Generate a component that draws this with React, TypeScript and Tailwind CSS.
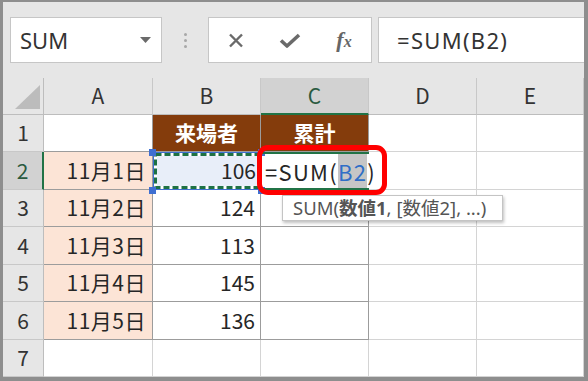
import React from "react";

const ROWS = [
  { n: "1", a: "", b: "来場者", c: "累計" },
  { n: "2", a: "11月1日", b: "106" },
  { n: "3", a: "11月2日", b: "124" },
  { n: "4", a: "11月3日", b: "113" },
  { n: "5", a: "11月4日", b: "145" },
  { n: "6", a: "11月5日", b: "136" },
  { n: "7", a: "", b: "" },
];

const COLS = ["A", "B", "C", "D", "E"];

function XIcon() {
  return (
    <svg width="16" height="15" viewBox="0 0 16 15">
      <path d="M2 1.5 L14 13.5 M14 1.5 L2 13.5" stroke="#6a6a6a" strokeWidth="2.4" fill="none" />
    </svg>
  );
}

function CheckIcon() {
  return (
    <svg width="22" height="15" viewBox="0 0 22 15">
      <path d="M2 7.5 L8 13 L20 2" stroke="#6a6a6a" strokeWidth="3.6" fill="none" strokeLinejoin="round" />
    </svg>
  );
}

function Ants() {
  // marching ants around the referenced cell
  return (
    <svg className="absolute inset-0 pointer-events-none" width="108" height="38">
      <rect x="2.5" y="2.5" width="103" height="33" fill="none" stroke="#ffffff" strokeWidth="3" />
      <rect x="2.5" y="2.5" width="103" height="33" fill="none" stroke="#1e7145" strokeWidth="3" strokeDasharray="6 3" />
      <rect x="0.5" y="0.5" width="107" height="37" fill="none" stroke="#3f6fd1" strokeWidth="1" />
    </svg>
  );
}

export default function App() {
  return (
    <div className="relative w-[588px] h-[381px] bg-[#8e8e8e] pl-[3px] pt-[2px] pr-[4px] pb-[4px] font-['Noto_Sans','Noto_Sans_CJK_JP',sans-serif]">
      {/* Toolbar */}
      <div className="h-[76px] bg-[#e6e6e6] flex items-start pt-[15px] pl-[7px]">
        <div className="w-[152px] h-[46px] bg-white border border-[#c6c6c6] flex items-center justify-between pl-[9px] pr-[10px]">
          <span className="text-[22px] text-[#333] leading-none">SUM</span>
          <svg width="11" height="6" viewBox="0 0 11 6">
            <path d="M0 0 H11 L5.5 6 Z" fill="#6a6a6a" />
          </svg>
        </div>
        <div className="w-[46px] h-[46px] flex flex-col items-center justify-center gap-[3px]">
          <span className="w-[3px] h-[3px] rounded-full bg-[#a8a8a8]" />
          <span className="w-[3px] h-[3px] rounded-full bg-[#a8a8a8]" />
          <span className="w-[3px] h-[3px] rounded-full bg-[#a8a8a8]" />
        </div>
        <div className="w-[164px] h-[46px] bg-white border border-[#c6c6c6] grid grid-cols-3 items-center justify-items-center">
          <XIcon />
          <CheckIcon />
          <span className="font-['Liberation_Serif',serif] italic font-bold text-[#666] leading-none">
            <span className="text-[22px]">f</span>
            <span className="text-[16px]">x</span>
          </span>
        </div>
        <div className="ml-[6px] flex-1 h-[46px] bg-white border-y border-l border-[#c6c6c6] flex items-center pl-[18px]">
          <span className="text-[22px] tracking-[1.3px] text-[#333] leading-none">=SUM(B2)</span>
        </div>
      </div>

      {/* Sheet grid */}
      <div className="grid grid-cols-[41px_109px_108px_108px_108px_107px] grid-rows-[37px_37px_38px_37px_38px_37px_38px_37px] bg-white font-['Noto_Sans_CJK_JP',sans-serif] text-[21px] text-[#262626]">
        {/* header row */}
        <div className="bg-[#e6e6e6] border-r border-b border-[#bdbdbd] flex items-end justify-end pr-[3px] pb-[5px]">
          <svg width="25" height="24" viewBox="0 0 25 24">
            <path d="M25 0 V24 H0 Z" fill="#bcbcbc" />
          </svg>
        </div>
        {COLS.map((c) =>
          c === "C" ? (
            <div key={c} className="bg-[#d2d2d2] border-r border-r-[#c8c8c8] border-b-2 border-b-[#217346] flex items-center justify-center text-[#2a5a40]">
              {c}
            </div>
          ) : (
            <div key={c} className="bg-[#e6e6e6] border-r border-r-[#c8c8c8] border-b border-b-[#bdbdbd] flex items-center justify-center text-[#333]">
              {c}
            </div>
          )
        )}

        {ROWS.map((r, i) => (
          <React.Fragment key={r.n}>
            {/* row number */}
            {i === 1 ? (
              <div className="bg-[#d2d2d2] border-r-2 border-r-[#217346] border-b border-b-[#c8c8c8] flex items-center justify-center text-[#2a5a40]">
                {r.n}
              </div>
            ) : (
              <div className="bg-[#e6e6e6] border-r border-r-[#bdbdbd] border-b border-b-[#c8c8c8] flex items-center justify-center text-[#333]">
                {r.n}
              </div>
            )}

            {/* column A */}
            {i === 0 ? (
              <div className="border-r border-b border-[#9c9c9c]" />
            ) : i < 6 ? (
              <div className="bg-[#fce4d6] border-r border-b border-[#9c9c9c] flex items-center justify-end pr-[6px] tracking-[0.5px]">
                {r.a}
              </div>
            ) : (
              <div className="border-r border-b border-[#d4d4d4]" />
            )}

            {/* column B */}
            {i === 0 ? (
              <div className="bg-[#843c0c] border-r border-b border-[#9c9c9c] flex items-center justify-center text-white font-bold">
                {r.b}
              </div>
            ) : i === 1 ? (
              <div className="relative bg-[#e8eef9] flex items-center justify-end pr-[5px]">
                {r.b}
                <Ants />
                <span className="absolute -left-[4px] -top-[3px] w-[7px] h-[7px] bg-[#3f6fd1]" />
                <span className="absolute -left-[4px] -bottom-[4px] w-[7px] h-[7px] bg-[#3f6fd1]" />
                <span className="absolute -right-[4px] -top-[3px] w-[7px] h-[7px] bg-[#3f6fd1]" />
                <span className="absolute -right-[4px] -bottom-[4px] w-[7px] h-[7px] bg-[#3f6fd1]" />
              </div>
            ) : i < 6 ? (
              <div className="border-r border-b border-[#9c9c9c] flex items-center justify-end pr-[5px]">
                {r.b}
              </div>
            ) : (
              <div className="border-r border-b border-[#d4d4d4]" />
            )}

            {/* column C */}
            {i === 0 ? (
              <div className="bg-[#843c0c] border-r border-b border-[#9c9c9c] flex items-center justify-center text-white font-bold">
                {r.c}
              </div>
            ) : i === 1 ? (
              <div className="relative z-10 flex items-stretch pl-[4px] whitespace-nowrap border-y-2 border-[#217346] text-[22px] tracking-[1.3px]">
                <span className="self-center">=SUM(</span>
                <span className="bg-[#c6c6c6] text-[#2f6ec7] flex items-center">B2</span>
                <span className="w-[2px] bg-black" />
                <span className="self-center">)</span>
              </div>
            ) : i < 6 ? (
              <div className="border-r border-b border-[#9c9c9c]" />
            ) : (
              <div className="border-r border-b border-[#d4d4d4]" />
            )}

            <div className="border-r border-b border-[#d4d4d4]" />
            <div className="border-r border-b border-[#d4d4d4]" />
          </React.Fragment>
        ))}
      </div>

      {/* function tooltip */}
      <div className="absolute left-[282px] top-[195px] w-[221px] h-[26px] bg-white border border-[#c4c4c4] shadow-[1px_2px_3px_rgba(0,0,0,0.25)] flex items-center pl-[10px] text-[18.5px] text-[#555] whitespace-nowrap z-20">
        SUM(<span className="font-bold">数値1</span>, [数値2], ...)
      </div>

      {/* red annotation frame */}
      <div className="absolute left-[257px] top-[145px] w-[130px] h-[50px] border-[5px] border-[#ff0000] rounded-[11px] z-30" />
    </div>
  );
}
